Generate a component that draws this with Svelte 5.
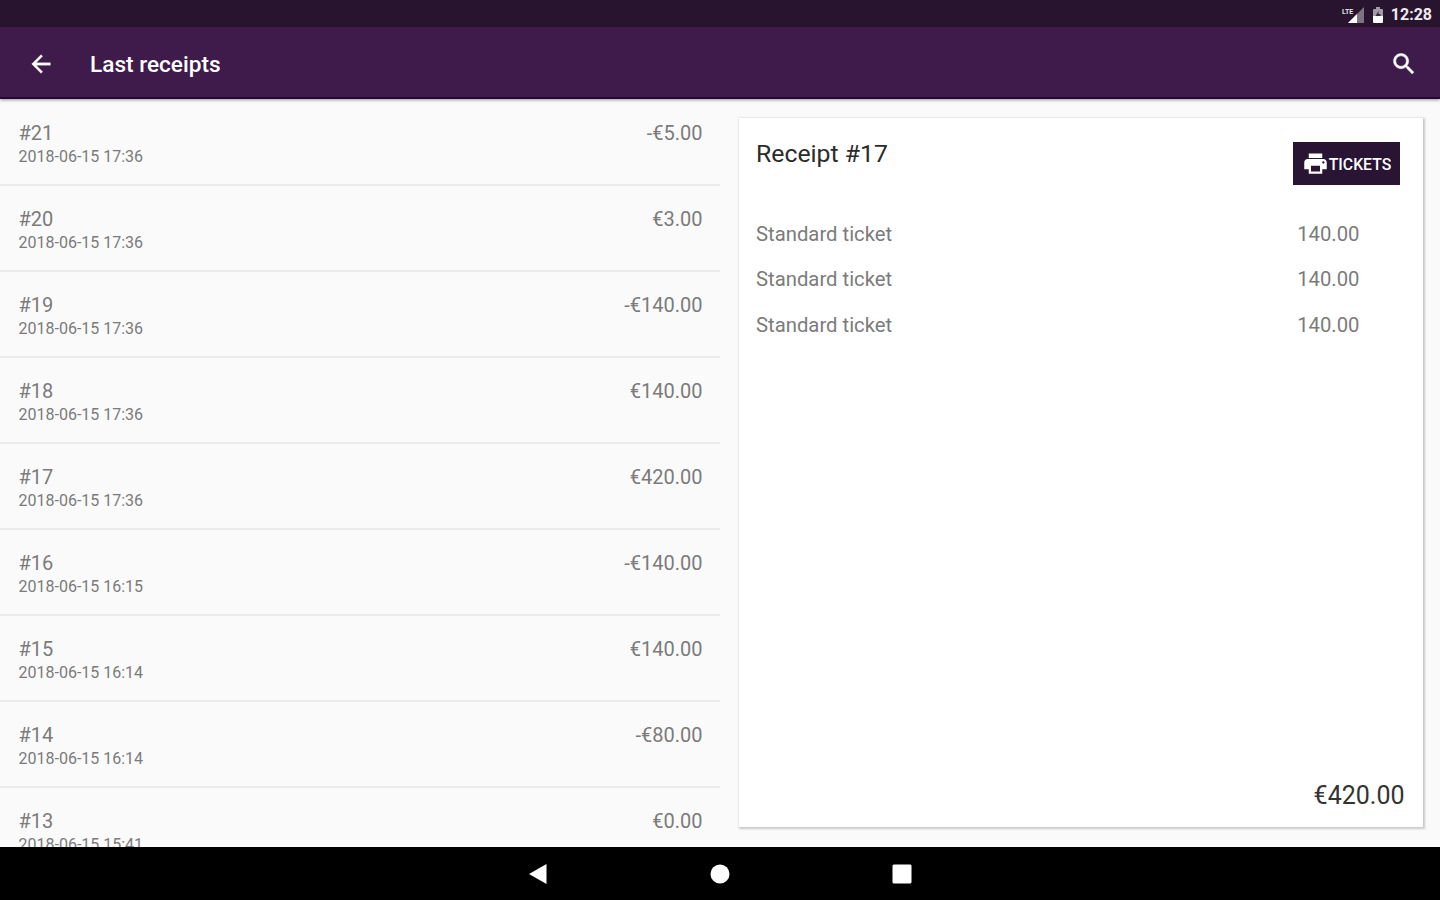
<script>
	const receipts = [
		{ id: 21, date: '2018-06-15 17:36', amount: '-€5.00' },
		{ id: 20, date: '2018-06-15 17:36', amount: '€3.00' },
		{ id: 19, date: '2018-06-15 17:36', amount: '-€140.00' },
		{ id: 18, date: '2018-06-15 17:36', amount: '€140.00' },
		{ id: 17, date: '2018-06-15 17:36', amount: '€420.00' },
		{ id: 16, date: '2018-06-15 16:15', amount: '-€140.00' },
		{ id: 15, date: '2018-06-15 16:14', amount: '€140.00' },
		{ id: 14, date: '2018-06-15 16:14', amount: '-€80.00' },
		{ id: 13, date: '2018-06-15 15:41', amount: '€0.00' }
	];

	let selectedId = 17;

	// positions of the opened receipt
	const lines = [
		{ name: 'Standard ticket', price: '140.00' },
		{ name: 'Standard ticket', price: '140.00' },
		{ name: 'Standard ticket', price: '140.00' }
	];

	$: selected = receipts.find((r) => r.id === selectedId);
</script>

<div class="screen">
	<div class="status-bar">
		<svg class="signal" width="22" height="18" viewBox="0 0 22 18">
			<path d="M22 1v16H6z" fill="#7d7185" />
			<path d="M15 8v9H6z" fill="#fff" />
			<text class="network" x="0" y="7.500">LTE</text>
		</svg>
		<svg class="battery" width="12" height="16" viewBox="0 0 12 16">
			<path d="M4 0h4v2h2q1 0 1 1v6H1V3q0-1 1-1h2z" fill="#a39aa8" />
			<path d="M1 9h10v6q0 1-1 1H2q-1 0-1-1z" fill="#fff" />
			<path d="M6.500 4L3.500 9h5V7H6.500z" fill="#3a2442" />
		</svg>
		<span class="clock">12:28</span>
	</div>

	<header class="toolbar">
		<button class="icon-btn" aria-label="Back">
			<svg width="28" height="28" viewBox="0 0 24 24" fill="#fff" stroke="#fff" stroke-width="0.300">
				<path d="M20 11H7.830l5.590-5.590L12 4l-8 8 8 8 1.410-1.410L7.830 13H20v-2z" />
			</svg>
		</button>
		<h1>Last receipts</h1>
		<button class="icon-btn" aria-label="Search">
			<svg width="28" height="28" viewBox="0 0 24 24" fill="#fff" stroke="#fff" stroke-width="0.400">
				<path
					d="M15.500 14h-.79l-.28-.27C15.410 12.590 16 11.110 16 9.500 16 5.910 13.090 3 9.500 3S3 5.910 3 9.500 5.910 16 9.500 16c1.610 0 3.090-.59 4.230-1.570l.27.28v.79l5 4.990L20.490 19l-4.990-5zm-6 0C7.010 14 5 11.990 5 9.500S7.010 5 9.500 5 14 7.010 14 9.500 11.990 14 9.500 14z"
				/>
			</svg>
		</button>
	</header>

	<main>
		<ul class="receipts">
			{#each receipts as receipt (receipt.id)}
				<li>
					<button class="receipt" on:click={() => (selectedId = receipt.id)}>
						<span class="info">
							<span class="number">#{receipt.id}</span>
							<span class="date">{receipt.date}</span>
						</span>
						<span class="number">{receipt.amount}</span>
					</button>
				</li>
			{/each}
		</ul>

		<section class="card">
			<div class="card-head">
				<h2>Receipt #{selected.id}</h2>
				<button class="print">
					<svg width="27" height="27" viewBox="0 0 24 24" fill="#fff">
						<path
							d="M19 8H5c-1.660 0-3 1.340-3 3v6h4v4h12v-4h4v-6c0-1.660-1.340-3-3-3zm-3 11H8v-5h8v5zm3-7c-.55 0-1-.45-1-1s.45-1 1-1 1 .45 1 1-.45 1-1 1zm-1-9H6v4h12V3z"
						/>
					</svg>
					<span>TICKETS</span>
				</button>
			</div>
			<div class="lines">
				{#each lines as line}
					<div class="line">
						<span>{line.name}</span>
						<span>{line.price}</span>
					</div>
				{/each}
			</div>
			<div class="total">{selected.amount}</div>
		</section>
	</main>

	<nav class="nav-bar">
		<svg width="20" height="22" viewBox="0 0 20 22"><path d="M1 11L18.500 1v20z" fill="#fff" /></svg>
		<svg width="20" height="20" viewBox="0 0 20 20"><circle cx="10" cy="10" r="9.500" fill="#fff" /></svg>
		<svg width="20" height="20" viewBox="0 0 20 20">
			<rect x="0.500" y="0.500" width="19" height="19" rx="1.500" fill="#fff" />
		</svg>
	</nav>
</div>

<style>
	:global(body) {
		margin: 0;
	}
	.screen {
		display: flex;
		flex-direction: column;
		width: 1440px;
		height: 900px;
		overflow: hidden;
		background: #fafafa;
		font-family: Roboto, 'Liberation Sans', sans-serif;
		color: #7b7b7b;
	}
	button {
		padding: 0;
		border: 0;
		background: none;
		font: inherit;
		color: inherit;
		cursor: pointer;
	}
	h1,
	h2 {
		margin: 0;
	}
	.status-bar {
		display: flex;
		flex: none;
		align-items: center;
		justify-content: flex-end;
		box-sizing: border-box;
		height: 27px;
		padding: 2px 8px 0 0;
		background: #291430;
	}
	.signal {
		margin-right: 8px;
	}
	.network {
		font-size: 7px;
		font-weight: 700;
		fill: #e4e0e6;
	}
	.battery {
		margin-right: 7px;
	}
	.clock {
		font-size: 16px;
		font-weight: 700;
		line-height: 20px;
		color: #eeebef;
	}
	.toolbar {
		display: flex;
		flex: none;
		align-items: center;
		box-sizing: border-box;
		height: 72px;
		padding: 1px 22px 0 27px;
		background: #3e1b4a;
		border-bottom: 2px solid #260638;
		box-shadow: 0 1px 3px rgba(40, 10, 50, 0.45);
		z-index: 1;
	}
	.toolbar h1 {
		flex: 1;
		margin: 4px 0 0 35px;
		font-size: 22.600px;
		font-weight: 500;
		line-height: 28px;
		color: #fff;
	}
	.icon-btn {
		display: flex;
		margin-top: 2px;
	}
	main {
		display: flex;
		flex: 1;
		min-height: 0;
	}
	.receipts {
		width: 720px;
		margin: 0;
		padding: 0;
		list-style: none;
		overflow: hidden;
	}
	.receipt {
		display: flex;
		align-items: flex-start;
		justify-content: space-between;
		box-sizing: border-box;
		width: 100%;
		height: 86px;
		padding: 21px 17.500px 0 18.500px;
		border-bottom: 2px solid #ebebeb;
		text-align: left;
	}
	li:first-child .receipt {
		height: 87px;
		padding-top: 22px;
	}
	.info {
		display: flex;
		flex-direction: column;
	}
	.number {
		font-size: 20px;
		line-height: 24px;
	}
	.date {
		font-size: 16px;
		line-height: 23px;
	}
	.card {
		display: flex;
		flex: 1;
		flex-direction: column;
		box-sizing: border-box;
		margin: 19px 17px 20px 19px;
		padding: 24px 18.500px 14px 17px;
		background: #fff;
		box-shadow: 1px 1px 2px 1px rgba(0, 0, 0, 0.2);
	}
	.card-head {
		display: flex;
		align-items: flex-start;
		justify-content: space-between;
		padding-right: 4.500px;
	}
	h2 {
		margin-top: -3px;
		font-size: 24.800px;
		font-weight: 400;
		line-height: 30px;
		color: #2b2b2b;
	}
	.print {
		display: flex;
		align-items: center;
		justify-content: center;
		width: 107px;
		height: 43px;
		background: #291433;
		font-size: 15.800px;
		font-weight: 500;
		color: #fff;
	}
	.print span {
		margin-top: 1px;
	}
	.lines {
		flex: 1;
		padding: 26.800px 45px 0 0;
	}
	.line {
		display: flex;
		justify-content: space-between;
		font-size: 20.300px;
		line-height: 45.500px;
	}
	.total {
		font-size: 25px;
		line-height: 34px;
		text-align: right;
		color: #333;
	}
	.nav-bar {
		display: flex;
		flex: none;
		align-items: center;
		justify-content: center;
		gap: 162px;
		height: 53px;
		background: #000;
	}
</style>
